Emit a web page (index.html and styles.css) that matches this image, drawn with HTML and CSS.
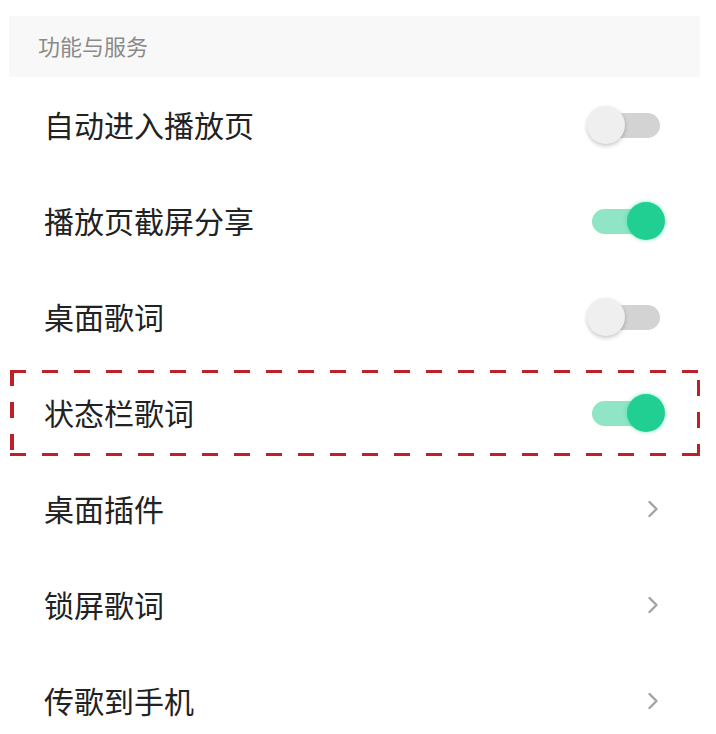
FILE: index.html
```html
<!DOCTYPE html>
<html lang="zh-CN">
<head>
<meta charset="utf-8">
<title>功能与服务</title>
<link rel="stylesheet" href="styles.css">
</head>
<body>
<div class="page">
  <div class="section-head">功能与服务</div>
  <div class="list">
    <div class="row"><span class="label">自动进入播放页</span><span class="toggle"><span class="track"></span><span class="knob"></span></span></div>
    <div class="row"><span class="label">播放页截屏分享</span><span class="toggle on"><span class="track"></span><span class="knob"></span></span></div>
    <div class="row"><span class="label">桌面歌词</span><span class="toggle"><span class="track"></span><span class="knob"></span></span></div>
    <div class="row highlight"><span class="label">状态栏歌词</span><span class="toggle on"><span class="track"></span><span class="knob"></span></span></div>
    <div class="row"><span class="label">桌面插件</span><svg class="chev" width="12" height="18" viewBox="0 0 12 18"><path d="M2.5 2 L9.5 9 L2.5 16" fill="none" stroke="#a3a3a3" stroke-width="2.4" stroke-linecap="round" stroke-linejoin="round"/></svg></div>
    <div class="row"><span class="label">锁屏歌词</span><svg class="chev" width="12" height="18" viewBox="0 0 12 18"><path d="M2.5 2 L9.5 9 L2.5 16" fill="none" stroke="#a3a3a3" stroke-width="2.4" stroke-linecap="round" stroke-linejoin="round"/></svg></div>
    <div class="row"><span class="label">传歌到手机</span><svg class="chev" width="12" height="18" viewBox="0 0 12 18"><path d="M2.5 2 L9.5 9 L2.5 16" fill="none" stroke="#a3a3a3" stroke-width="2.4" stroke-linecap="round" stroke-linejoin="round"/></svg></div>
  </div>
</div>
</body>
</html>
```
FILE: styles.css
```css
html, body {
  margin: 0;
  padding: 0;
  background: #ffffff;
}
body {
  font-family: "Noto Sans CJK SC", "Noto Sans", sans-serif;
  width: 716px;
  height: 734px;
  overflow: hidden;
}
.page {
  padding-top: 16px;
}
.section-head {
  margin: 0 16px 0 9px;
  height: 61px;
  box-sizing: border-box;
  background: #f8f8f8;
  padding: 0 0 4px 29px;
  display: flex;
  align-items: center;
  font-size: 22px;
  color: #8a8a8a;
}
.list {
  display: flex;
  flex-direction: column;
}
.row {
  position: relative;
  height: 96px;
  display: flex;
  align-items: center;
  justify-content: space-between;
  padding: 0 51px 0 44px;
}
.label {
  font-size: 30px;
  color: #222222;
  line-height: 1;
  padding-bottom: 3px;
}
.toggle {
  position: relative;
  width: 78px;
  height: 38px;
  display: block;
}
.track {
  position: absolute;
  left: 5px;
  top: 7px;
  width: 68px;
  height: 25px;
  border-radius: 13px;
  background: #d3d3d3;
}
.knob {
  position: absolute;
  left: 0;
  top: 0;
  width: 38px;
  height: 38px;
  border-radius: 50%;
  background: #efefef;
  box-shadow: 0 2px 4px rgba(0, 0, 0, 0.22);
}
.toggle.on .track {
  background: #8fe5c5;
}
.toggle.on .knob {
  left: 40px;
  background: #22cf93;
  box-shadow: 0 0 4px rgba(34, 207, 147, 0.55);
}
.chev {
  display: block;
  margin-right: 6px;
}
.highlight::after {
  content: "";
  position: absolute;
  left: 10px;
  top: 5px;
  width: 690px;
  height: 86px;
  pointer-events: none;
  background:
    repeating-linear-gradient(90deg, #bd2028 0 16px, transparent 16px 32px) left top / 100% 3px no-repeat,
    repeating-linear-gradient(90deg, #bd2028 0 16px, transparent 16px 32px) left bottom / 100% 3px no-repeat,
    repeating-linear-gradient(180deg, #bd2028 0 16px, transparent 16px 32px) left top / 4px 100% no-repeat,
    repeating-linear-gradient(180deg, transparent 0 10px, #bd2028 10px 26px, transparent 26px 32px) right top / 3px 100% no-repeat;
}
```
